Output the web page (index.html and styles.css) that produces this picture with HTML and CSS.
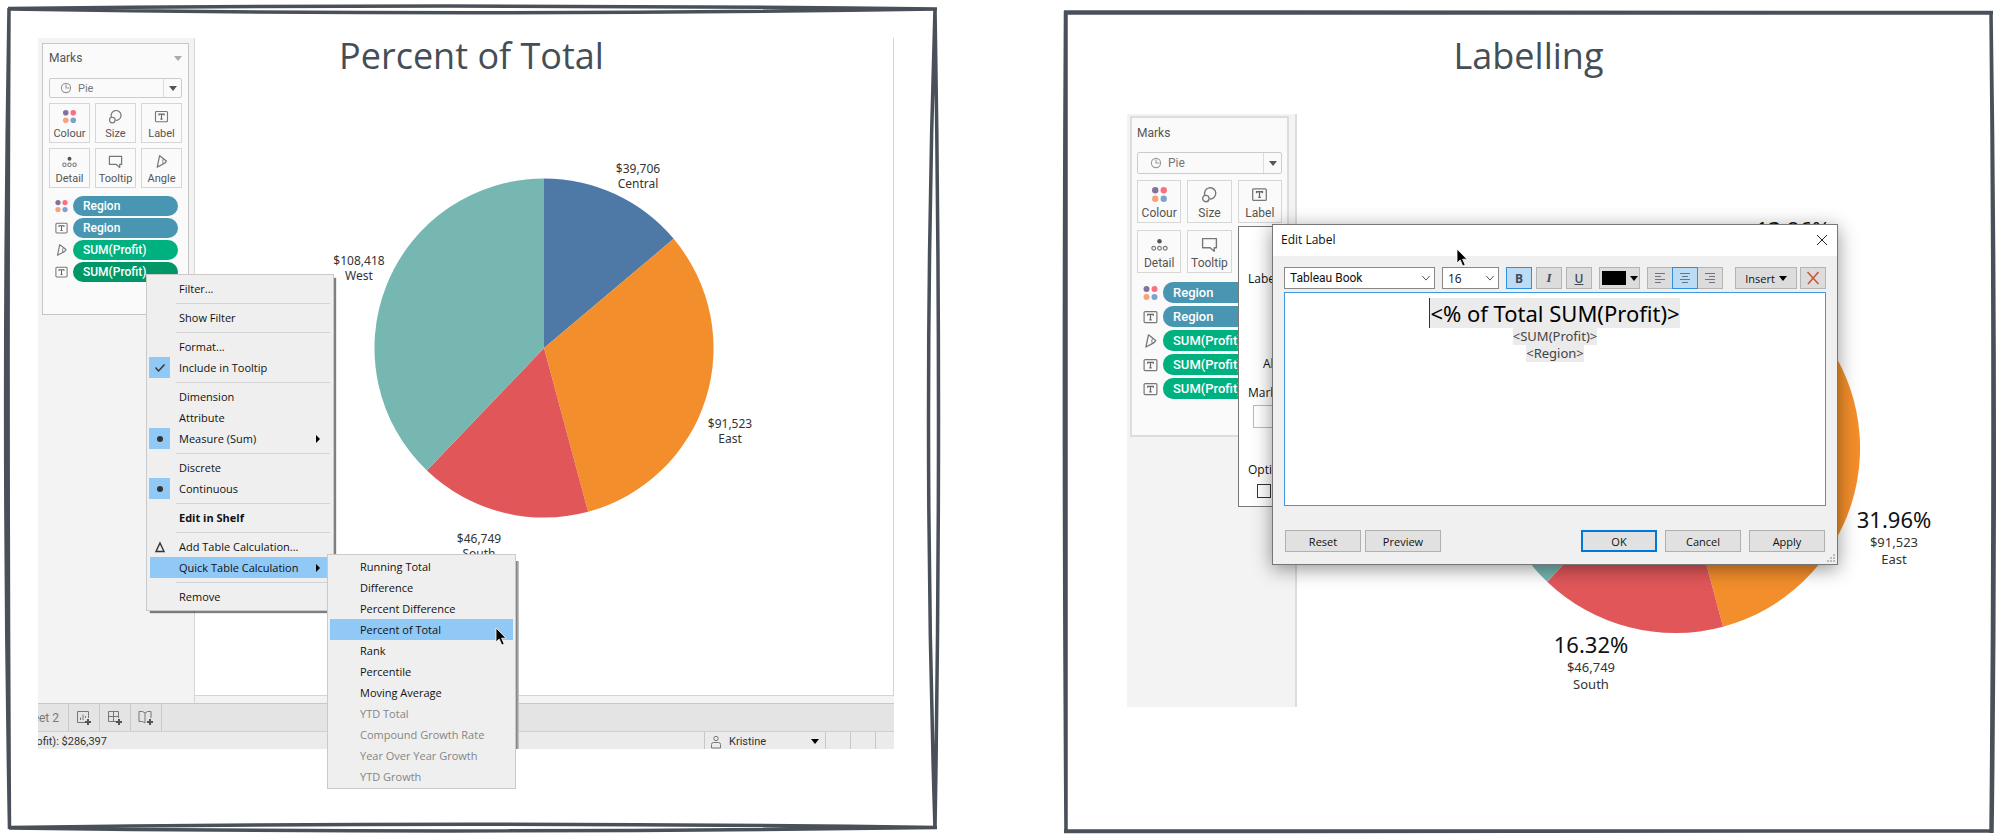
FILE: index.html
```html
<!DOCTYPE html>
<html lang="en">
<head>
	<meta charset="utf-8">
	<title>Percent of Total / Labelling</title>
	<link rel="stylesheet" href="styles.css">
</head>
<body>

<!-- shared icons -->
<svg class="defs" aria-hidden="true">
	<symbol id="i-colour" viewBox="0 0 16 16">
		<circle cx="4" cy="4" r="3" fill="#86719b"/><circle cx="12" cy="4" r="3" fill="#fb6f82"/>
		<circle cx="4" cy="12" r="3" fill="#f2a57c"/><circle cx="12" cy="12" r="3" fill="#7da3cc"/>
	</symbol>
	<symbol id="i-size" viewBox="0 0 16 16">
		<path d="M3.6 8.6A5.3 5.3 0 1 1 8.4 12.2" fill="none" stroke="#777" stroke-width="1.3"/>
		<circle cx="4.6" cy="11.8" r="3" fill="none" stroke="#777" stroke-width="1.3"/>
	</symbol>
	<symbol id="i-label" viewBox="0 0 16 16">
		<rect x="1.6" y="2.6" width="12.8" height="11" rx="1" fill="none" stroke="#777" stroke-width="1.2"/>
		<path d="M5.2 6.8V5.4h5.6v1.4M8 5.4v5.4M6.8 10.8h2.4" fill="none" stroke="#666" stroke-width="1.2"/>
	</symbol>
	<symbol id="i-detail" viewBox="0 0 16 16">
		<circle cx="8" cy="5" r="2.1" fill="#555"/>
		<g fill="none" stroke="#777" stroke-width="1.1"><circle cx="2.6" cy="11.5" r="1.8"/><circle cx="8" cy="11.5" r="1.8"/><circle cx="13.4" cy="11.5" r="1.8"/></g>
	</symbol>
	<symbol id="i-tooltip" viewBox="0 0 16 16">
		<path d="M1.5 2.5h13v8.5h-2v3.4L8.6 11H1.5z" fill="none" stroke="#777" stroke-width="1.3" stroke-linejoin="round"/>
	</symbol>
	<symbol id="i-angle" viewBox="0 0 16 16">
		<path d="M6 1.800L13.200 7.500q-.8 2-3.400 3.200L3.400 14z" fill="none" stroke="#777" stroke-width="1.3" stroke-linejoin="round"/>
		<path d="M10 5.200q-1.400 2.600-.2 5.500" fill="none" stroke="#777"/>
	</symbol>
	<symbol id="i-pie" viewBox="0 0 12 12">
		<circle cx="6" cy="6" r="4.6" fill="none" stroke="#999" stroke-width="1.1"/>
		<path d="M6 2.4V6h3.6" fill="none" stroke="#999" stroke-width="1.1"/>
	</symbol>
	<symbol id="i-cursor" viewBox="0 0 12 19">
		<path d="M1 1v14l3.2-3 2.6 6 2.4-1-2.6-5.8H11z" fill="#000" stroke="#fff" stroke-width=".8"/>
	</symbol>
	<symbol id="i-chev" viewBox="0 0 12 12">
		<path d="M1.5 3.5L6 8.5l4.500-5" fill="none" stroke="#555" stroke-width="1.2"/>
	</symbol>
</svg>

<section class="panel">
	<svg class="frame" viewBox="0 0 933 828" preserveAspectRatio="none" aria-hidden="true">
		<path d="M3 4.500Q460 -.5 932 5M3 5Q460 12.500 932 5"/>
		<path d="M930 4Q917 414 930 825M930 4Q937 414 930 825"/>
		<path d="M4 823.500Q460 817 932 823.500M4 824Q460 830 932 823.500"/>
		<path d="M4 4Q-3 414 4.500 825M4 4Q2 414 4.500 825"/>
	</svg>
	<h2 class="title">Percent of Total</h2>

	<div class="screen">
		<div class="work">
			<div class="sidebar">
				<div class="marks">
					<div class="marks_head">Marks <i class="tri grey"></i></div>
					<div class="mark_type">
						<svg><use href="#i-pie"/></svg>
						<select aria-label="Mark type"><option>Pie</option></select>
						<span class="drop"><i class="tri"></i></span>
					</div>
					<div class="mark_btns">
						<button><svg><use href="#i-colour"/></svg>Colour</button>
						<button><svg><use href="#i-size"/></svg>Size</button>
						<button><svg><use href="#i-label"/></svg>Label</button>
						<button><svg><use href="#i-detail"/></svg>Detail</button>
						<button><svg><use href="#i-tooltip"/></svg>Tooltip</button>
						<button><svg><use href="#i-angle"/></svg>Angle</button>
					</div>
					<ul class="pills">
						<li><svg><use href="#i-colour"/></svg><button class="pill blue">Region</button></li>
						<li><svg><use href="#i-label"/></svg><button class="pill blue">Region</button></li>
						<li><svg><use href="#i-angle"/></svg><button class="pill green">SUM(Profit)</button></li>
						<li><svg><use href="#i-label"/></svg><button class="pill green active">SUM(Profit)</button></li>
					</ul>
				</div>
			</div>
			<div class="canvas bordered">
				<svg class="chart" viewBox="0 0 698 657">
					<g transform="translate(349 310) scale(169.500)">
						<path class="central" d="M0 0V-1A1 1 0 0 1 .765 -.644z"/>
						<path class="east" d="M0 0L.765 -.644A1 1 0 0 1 .26 .966z"/>
						<path class="south" d="M0 0L.26 .966A1 1 0 0 1 -.691 .723z"/>
						<path class="west" d="M0 0L-.691 .723A1 1 0 0 1 0 -1z"/>
					</g>
					<text x="443" y="135">$39,706</text><text x="443" y="150">Central</text>
					<text x="164" y="227">$108,418</text><text x="164" y="242">West</text>
					<text x="535" y="390">$91,523</text><text x="535" y="405">East</text>
					<text x="284" y="505">$46,749</text><text x="284" y="520">South</text>
				</svg>
			</div>
		</div>
		<div class="tabs">
			<a class="tab" href="#">Sheet 2</a>
			<button aria-label="New worksheet"><svg viewBox="0 0 16 16"><path d="M9 12.500H1.500v-11h11V8M4.500 10V7.500M7 10V4.500M9.500 8V6"/><path class="plus" d="M12 9v6M9 12h6"/></svg></button>
			<button aria-label="New dashboard"><svg viewBox="0 0 16 16"><path d="M9 11.500H1.500v-10h10V8M6.500 1.500v10M1.500 6.500h10"/><path class="plus" d="M12 9v6M9 12h6"/></svg></button>
			<button aria-label="New story"><svg viewBox="0 0 16 16"><path d="M13 8V1.500H9.500L7 3 4.500 1.500H1v10h3.500L7 13V3"/><path class="plus" d="M12 9v6M9 12h6"/></svg></button>
		</div>
		<div class="status">
			<span class="sum">SUM(Profit): $286,397</span>
			<button class="user">
				<svg viewBox="0 0 12 14"><circle cx="6" cy="3.500" r="2.200"/><path d="M1.500 13V9.500q0-2 2-2h5q2 0 2 2V13z"/></svg>
				Kristine <i class="tri black"></i>
			</button>
			<span class="cell"></span><span class="cell"></span><span class="cell"></span>
		</div>
	</div>

	<ul class="menu main_menu">
		<li>Filter...</li>
		<li class="sep"></li>
		<li>Show Filter</li>
		<li class="sep"></li>
		<li>Format...</li>
		<li><span class="mark"><svg viewBox="0 0 12 12"><path d="M1.500 5.500l3 3.500 6-6.500"/></svg></span>Include in Tooltip</li>
		<li class="sep"></li>
		<li>Dimension</li>
		<li>Attribute</li>
		<li><span class="mark"><i class="dot"></i></span>Measure (Sum)<i class="arrow"></i></li>
		<li class="sep"></li>
		<li>Discrete</li>
		<li><span class="mark"><i class="dot"></i></span>Continuous</li>
		<li class="sep"></li>
		<li class="bold">Edit in Shelf</li>
		<li class="sep"></li>
		<li><span class="mark plain"><svg viewBox="0 0 12 12"><path d="M6 2l4 8.500H2z"/></svg></span>Add Table Calculation...</li>
		<li class="hot">Quick Table Calculation<i class="arrow"></i></li>
		<li class="sep"></li>
		<li>Remove</li>
	</ul>

	<ul class="menu sub_menu">
		<li>Running Total</li>
		<li>Difference</li>
		<li>Percent Difference</li>
		<li class="hot">Percent of Total<svg class="cursor"><use href="#i-cursor"/></svg></li>
		<li>Rank</li>
		<li>Percentile</li>
		<li>Moving Average</li>
		<li class="off">YTD Total</li>
		<li class="off">Compound Growth Rate</li>
		<li class="off">Year Over Year Growth</li>
		<li class="off">YTD Growth</li>
	</ul>
</section>

<section class="panel">
	<svg class="frame" viewBox="0 0 933 828" preserveAspectRatio="none" aria-hidden="true">
		<path d="M2 8Q460 8 931 8.500M2 9Q460 10 931 9"/>
		<path d="M929 7Q933 414 929 829M929 7Q935 414 930 829"/>
		<path d="M2 827Q460 826 931 827M2 827.500Q460 829 931 827"/>
		<path d="M3.500 7Q1 414 4 829M4 7Q3 414 4 829"/>
	</svg>
	<h2 class="title">Labelling</h2>

	<div class="screen large">
		<div class="work">
			<div class="sidebar">
				<div class="marks">
					<div class="marks_head">Marks</div>
					<div class="mark_type">
						<svg><use href="#i-pie"/></svg>
						<select aria-label="Mark type"><option>Pie</option></select>
						<span class="drop"><i class="tri"></i></span>
					</div>
					<div class="mark_btns">
						<button><svg><use href="#i-colour"/></svg>Colour</button>
						<button><svg><use href="#i-size"/></svg>Size</button>
						<button><svg><use href="#i-label"/></svg>Label</button>
						<button><svg><use href="#i-detail"/></svg>Detail</button>
						<button><svg><use href="#i-tooltip"/></svg>Tooltip</button>
					</div>
					<ul class="pills">
						<li><svg><use href="#i-colour"/></svg><button class="pill blue">Region</button></li>
						<li><svg><use href="#i-label"/></svg><button class="pill blue">Region</button></li>
						<li><svg><use href="#i-angle"/></svg><button class="pill green">SUM(Profit)</button></li>
						<li><svg><use href="#i-label"/></svg><button class="pill green">SUM(Profit)</button></li>
						<li><svg><use href="#i-label"/></svg><button class="pill green">SUM(Profit)</button></li>
					</ul>
				</div>
			</div>
			<div class="canvas">
				<svg class="chart" viewBox="0 0 690 593">
					<g transform="translate(378 334) scale(185)">
						<path class="central" d="M0 0V-1A1 1 0 0 1 .765 -.644z"/>
						<path class="east" d="M0 0L.765 -.644A1 1 0 0 1 .26 .966z"/>
						<path class="south" d="M0 0L.26 .966A1 1 0 0 1 -.691 .723z"/>
						<path class="west" d="M0 0L-.691 .723A1 1 0 0 1 0 -1z"/>
					</g>
					<text class="pct" x="496" y="124">13.86%</text>
					<text class="pct" x="597" y="414">31.96%</text><text x="597" y="433">$91,523</text><text x="597" y="450">East</text>
					<text class="pct" x="294" y="539">16.32%</text><text x="294" y="558">$46,749</text><text x="294" y="575">South</text>
				</svg>
			</div>
		</div>
	</div>

	<div class="label_popup">
		<h3>Label Appearance</h3>
		<p>Alignment</p>
		<h3>Marks to Label</h3>
		<div class="choice"></div>
		<h3>Options</h3>
		<input type="checkbox" aria-label="Allow labels to overlap other marks">
	</div>

	<div class="dialog" role="dialog" aria-labelledby="dlg_title">
		<div class="dialog_title">
			<span id="dlg_title">Edit Label</span>
			<button aria-label="Close"><svg viewBox="0 0 12 12"><path d="M1 1l10 10M11 1L1 11"/></svg></button>
		</div>
		<div class="dialog_body">
			<div class="toolbar">
				<div class="combo font"><select aria-label="Font"><option>Tableau Book</option></select><svg><use href="#i-chev"/></svg></div>
				<div class="combo size"><select aria-label="Font size"><option>16</option></select><svg><use href="#i-chev"/></svg></div>
				<div class="styles">
					<button class="tool on"><b>B</b></button>
					<button class="tool"><i>I</i></button>
					<button class="tool"><u>U</u></button>
				</div>
				<button class="tool colour" aria-label="Text colour"><span class="swatch"></span><i class="tri black"></i></button>
				<div class="aligns">
					<button class="tool" aria-label="Align left"><svg viewBox="0 0 12 12"><path d="M1 1.500h10M1 4.500h6M1 7.500h10M1 10.500h6"/></svg></button>
					<button class="tool on" aria-label="Align centre"><svg viewBox="0 0 12 12"><path d="M1 1.500h10M3 4.500h6M1 7.500h10M3 10.500h6"/></svg></button>
					<button class="tool" aria-label="Align right"><svg viewBox="0 0 12 12"><path d="M1 1.500h10M5 4.500h6M1 7.500h10M5 10.500h6"/></svg></button>
				</div>
				<div class="inserts">
					<button class="tool insert">Insert <i class="tri black"></i></button>
					<button class="tool clear" aria-label="Clear"><svg viewBox="0 0 14 14"><path d="M1.500 1l11 12M12.500 1L2 13"/></svg></button>
				</div>
			</div>
			<div class="editor" contenteditable="true" role="textbox" aria-label="Label text">
				<div class="big"><span>&lt;% of Total SUM(Profit)&gt;</span></div>
				<div><span>&lt;SUM(Profit)&gt;</span></div>
				<div><span>&lt;Region&gt;</span></div>
			</div>
			<div class="actions">
				<button>Reset</button>
				<button class="preview">Preview</button>
				<button class="ok">OK</button>
				<button>Cancel</button>
				<button>Apply</button>
			</div>
		</div>
		<svg class="grip" viewBox="0 0 9 9" aria-hidden="true"><path d="M6 0h2v2H6zM3 3h2v2H3zM6 3h2v2H6zM0 6h2v2H0zM3 6h2v2H3zM6 6h2v2H6z"/></svg>
		<svg class="cursor"><use href="#i-cursor"/></svg>
	</div>
</section>

</body>
</html>
```
FILE: styles.css
```css
*{
	box-sizing: border-box;
}
body{
	margin: 0;
	padding: 4px 5px 8px;
	min-height: 100vh;
	display: grid;
	grid-template-columns: 1fr 1fr;
	gap: 124px;
	background: #fff;
	font-family: Roboto, "Liberation Sans", sans-serif;
	font-size: 11px;
	color: #555;
}
ul{
	list-style: none;
	margin: 0;
	padding: 0;
}
button, select{
	font: inherit;
	color: inherit;
	border: 0;
	padding: 0;
	margin: 0;
	background: none;
}
select{
	appearance: none;
}
.defs{
	position: absolute;
	width: 0;
	height: 0;
}
.tri{
	display: block;
	border: 4px solid transparent;
	border-top: 5px solid #555;
	border-bottom: 0;
}
.tri.grey{
	border-top-color: #aaa;
}
.tri.black{
	border-top-color: #000;
}

/* sketched panel */
.panel{
	position: relative;
}
.frame{
	position: absolute;
	inset: 0;
	width: 100%;
	height: 100%;
	overflow: visible;
}
.frame path{
	fill: none;
	stroke: #495059;
	stroke-width: 3.5;
}
.title{
	position: absolute;
	left: 0;
	right: 0;
	top: 28px;
	margin: 0;
	text-align: center;
	font: 400 36px/48px "Open Sans", sans-serif;
	color: #454e57;
}

/* workbook */
.screen{
	margin: 34px 44px 0 33px;
	background: #f3f3f3;
}
.work{
	display: flex;
}
.sidebar{
	width: 157px;
	background: #f3f3f3;
	border-right: 1px solid #d6d6d6;
}
.marks{
	margin: 5px 5px 0 4px;
	padding: 0 6px 32px;
	border: 1px solid #c6c6c6;
	background: #fafafa;
}
.marks_head{
	display: flex;
	align-items: center;
	justify-content: space-between;
	height: 28px;
	margin-bottom: 6px;
	font-size: 12px;
}
.mark_type{
	display: flex;
	align-items: center;
	height: 20px;
	padding-left: 10px;
	margin-bottom: 5px;
	border: 1px solid #ccc;
	border-radius: 2px;
	color: #777;
}
.mark_type svg{
	width: 12px;
	height: 12px;
}
.mark_type select{
	flex: 1;
	padding-left: 6px;
}
.drop{
	align-self: stretch;
	width: 18px;
	display: flex;
	align-items: center;
	justify-content: center;
	border-left: 1px solid #ddd;
}
.mark_btns{
	display: grid;
	grid-template-columns: repeat(3, 1fr);
	grid-auto-rows: 40px;
	gap: 5px;
	margin-bottom: 8px;
}
.mark_btns button{
	display: flex;
	flex-direction: column;
	align-items: center;
	justify-content: space-between;
	padding: 5px 0 1px;
	border: 1px solid #d6d6d6;
	line-height: 15px;
}
.mark_btns svg{
	width: 15px;
	height: 15px;
}
.pills{
	display: grid;
	gap: 2px;
	padding-right: 4px;
}
.pills li{
	display: grid;
	grid-template-columns: 24px 1fr;
	align-items: center;
}
.pills svg{
	width: 15px;
	height: 14px;
	margin-left: 5px;
}
.pill{
	height: 20px;
	padding-left: 10px;
	border-radius: 10px;
	text-align: left;
	font-size: 12px;
	font-weight: 500;
	color: #fff;
}
.blue{
	background: #4996b2;
}
.green{
	background: #00b180;
}
.active{
	background: #009768;
}
.canvas{
	flex: 1;
	background: #fff;
}
.bordered{
	margin-bottom: 7px;
	border-right: 1px solid #d4d4d4;
	border-bottom: 1px solid #d4d4d4;
}
.chart{
	display: block;
	width: 100%;
}
.chart text{
	font: 12px "Noto Sans", sans-serif;
	fill: #333;
	text-anchor: middle;
}
.central{ fill: #4e79a7; }
.east{ fill: #f28e2b; }
.south{ fill: #e15759; }
.west{ fill: #76b7b2; }

.tabs{
	display: flex;
	height: 28px;
	border-top: 1px solid #c8c8c8;
	background: #e4e4e4;
}
.tab{
	display: flex;
	align-items: center;
	justify-content: flex-end;
	width: 31px;
	padding-right: 9px;
	overflow: hidden;
	white-space: nowrap;
	font-size: 12px;
	color: #777;
	text-decoration: none;
	border-right: 1px solid #c8c8c8;
}
.tabs button{
	display: flex;
	align-items: center;
	justify-content: center;
	width: 31px;
	border-right: 1px solid #c8c8c8;
}
.tabs svg{
	width: 16px;
	height: 16px;
	fill: none;
	stroke: #777;
}
.tabs .plus{
	stroke: #555;
	stroke-width: 2;
}
.status{
	display: flex;
	height: 18px;
	border-top: 1px solid #d0d0d0;
	background: #ebebeb;
	line-height: 20px;
	color: #333;
	overflow: hidden;
}
.sum{
	display: flex;
	justify-content: flex-end;
	width: 69px;
	margin-right: auto;
	overflow: hidden;
	white-space: nowrap;
}
.user{
	display: flex;
	align-items: center;
	gap: 7px;
	width: 121px;
	padding: 2px 6px 0 5px;
	border-left: 1px solid #c8c8c8;
}
.user svg{
	width: 12px;
	height: 14px;
	fill: none;
	stroke: #777;
}
.user .tri{
	margin-left: auto;
}
.cell{
	width: 25px;
	border-left: 1px solid #c8c8c8;
}
.cell:last-child{
	width: 19px;
}

/* context menus */
.menu{
	position: absolute;
	width: 188px;
	padding: 3px 3px;
	background: #efefef;
	border: 1px solid #cacaca;
	font: 11px/21px "Open Sans", sans-serif;
	color: #111;
}
.main_menu{
	left: 141px;
	top: 270px;
	box-shadow: 3px 3px 1px -1px rgba(0,0,0,.5);
}
.sub_menu{
	left: 322px;
	top: 550px;
	padding: 1px 2px;
	width: 189px;
}
.sub_menu:after{
	content: "";
	position: absolute;
	right: -4px;
	top: 6px;
	bottom: 39px;
	width: 3px;
	background: linear-gradient(to right, #777, #ccc);
}
.menu li{
	position: relative;
	display: flex;
	align-items: center;
	height: 21px;
	padding-left: 29px;
}
.menu .sep{
	height: 8px;
	padding: 0;
}
.sep:after{
	content: "";
	flex: 1;
	margin-left: 26px;
	border-top: 1px solid #d4d4d4;
}
.menu .hot{
	background: #90c8f6;
}
.sub_menu li{
	padding-left: 30px;
}
.menu .off{
	color: #858585;
}
.menu .bold{
	font-weight: 700;
}
.mark{
	display: flex;
	align-items: center;
	justify-content: center;
	width: 21px;
	height: 21px;
	margin: 0 9px 0 -30px;
	background: #90c8f6;
}
.mark.plain{
	background: none;
}
.mark svg{
	width: 12px;
	height: 12px;
	fill: none;
	stroke: #333;
	stroke-width: 1.4;
}
.dot{
	width: 6px;
	height: 6px;
	border-radius: 50%;
	background: #333;
}
.arrow{
	margin-left: auto;
	margin-right: 10px;
	border: 4px solid transparent;
	border-left: 4px solid #000;
	border-right: 0;
}
.cursor{
	position: absolute;
	width: 12px;
	height: 19px;
}
.hot .cursor{
	right: 6px;
	top: 8px;
	z-index: 1;
}

/* right hand screenshot */
.large{
	margin: 110px 8px 0 65px;
	background: none;
	font-size: 12px;
}
.large .sidebar{
	width: 170px;
	border-right: 2px solid #ddd;
}
.large .marks{
	margin: 2px 6px 0 3px;
	padding: 0 5px 36px;
	border: 2px solid #ddd;
}
.large .marks_head{
	height: 30px;
	margin-bottom: 4px;
}
.large .mark_type{
	height: 22px;
	margin-bottom: 6px;
	padding-left: 12px;
}
.large .mark_btns{
	grid-auto-rows: 43px;
	gap: 7px 6px;
	margin-bottom: 9px;
}
.large .mark_btns svg{
	width: 17px;
	height: 17px;
}
.large .pills{
	gap: 3px;
}
.large .pills li{
	grid-template-columns: 26px 1fr;
}
.large .pills svg{
	width: 17px;
	height: 16px;
}
.large .pill{
	height: 21px;
	font-size: 13px;
}
.large .chart text{
	font-size: 13px;
}
.large .chart .pct{
	font-size: 22px;
	fill: #111;
}
.label_popup{
	position: absolute;
	left: 176px;
	top: 222px;
	width: 240px;
	height: 281px;
	padding: 42px 9px 0;
	border: 1px solid #777;
	background: #fff;
	font: 12px/20px "Open Sans", sans-serif;
	color: #111;
}
.label_popup h3{
	margin: 0;
	font: inherit;
}
.label_popup p{
	margin: 65px 0 9px 15px;
}
.choice{
	height: 23px;
	margin: 2px 0 32px 5px;
	border: 1px solid #bbb;
}
.label_popup input{
	appearance: none;
	display: block;
	width: 14px;
	height: 14px;
	margin: 4px 0 0 9px;
	border: 1px solid #333;
}

/* edit label dialog */
.dialog{
	position: absolute;
	left: 210px;
	top: 220px;
	width: 566px;
	border: 1px solid #777;
	background: #f0f0f0;
	box-shadow: 0 4px 18px rgba(0,0,0,.42);
	font: 12px "Open Sans", sans-serif;
	color: #111;
}
.dialog_title{
	display: flex;
	align-items: center;
	justify-content: space-between;
	height: 31px;
	padding: 0 9px 2px 8px;
	background: #fff;
}
.dialog_title button{
	display: flex;
}
.dialog_title svg{
	width: 12px;
	height: 12px;
	stroke: #222;
}
.dialog_body{
	padding: 11px 11px 12px;
}
.toolbar{
	display: flex;
	gap: 7px;
	height: 22px;
	margin-bottom: 3px;
}
.combo{
	display: flex;
	align-items: center;
	padding: 0 3px 0 5px;
	background: #fff;
	border: 1px solid #888;
}
.combo select{
	flex: 1;
	min-width: 0;
}
.combo svg{
	width: 10px;
	height: 10px;
}
.font{
	flex: 1;
	font-family: Roboto, sans-serif;
}
.size{
	width: 57px;
}
.styles{
	display: flex;
	gap: 4px;
}
.aligns{
	display: flex;
}
.aligns .tool + .tool{
	margin-left: -1px;
}
.inserts{
	display: flex;
	gap: 3px;
	margin-left: 5px;
}
.tool{
	display: flex;
	align-items: center;
	justify-content: center;
	width: 26px;
	border: 1px solid #b4b4b4;
	background: #dcdcdc;
	color: #3f4a58;
}
.tool.on{
	position: relative;
	border-color: #2f8fe0;
	background: #bcdcf5;
}
.tool i:not(.tri){
	font: italic 700 13px "Liberation Serif", serif;
}
.tool u{
	font-weight: 600;
}
.tool svg{
	width: 12px;
	height: 12px;
	stroke: #6b7480;
}
.tool.colour{
	width: 41px;
	gap: 4px;
}
.swatch{
	width: 24px;
	height: 14px;
	background: #000;
}
.tool.insert{
	width: 62px;
	gap: 4px;
	color: #111;
	font-size: 11px;
}
.clear svg{
	width: 14px;
	height: 14px;
	stroke: #c9563a;
	stroke-width: 1.6;
}
.editor{
	min-height: 214px;
	padding-top: 5px;
	border: 1px solid #3f97df;
	background: #fff;
	text-align: center;
	font: 13px/17px "Noto Sans", sans-serif;
	color: #444;
}
.editor span{
	display: inline-block;
	background: #ebebeb;
}
.editor .big{
	font-size: 22px;
	line-height: 30px;
	color: #000;
}
.big span{
	box-shadow: -1px 0 0 #333;
}
.actions{
	display: flex;
	gap: 8px;
	margin-top: 24px;
	padding: 0 1px;
}
.actions button{
	width: 76px;
	height: 22px;
	border: 1px solid #b0b0b0;
	background: #e1e1e1;
	font-size: 11px;
}
.actions .preview{
	margin-left: -4px;
	margin-right: auto;
}
.actions .ok{
	border: 2px solid #0078d7;
}
.grip{
	position: absolute;
	right: 1px;
	bottom: 1px;
	width: 9px;
	height: 9px;
	fill: #bbb;
}
.dialog .cursor{
	left: 183px;
	top: 23px;
}
```
